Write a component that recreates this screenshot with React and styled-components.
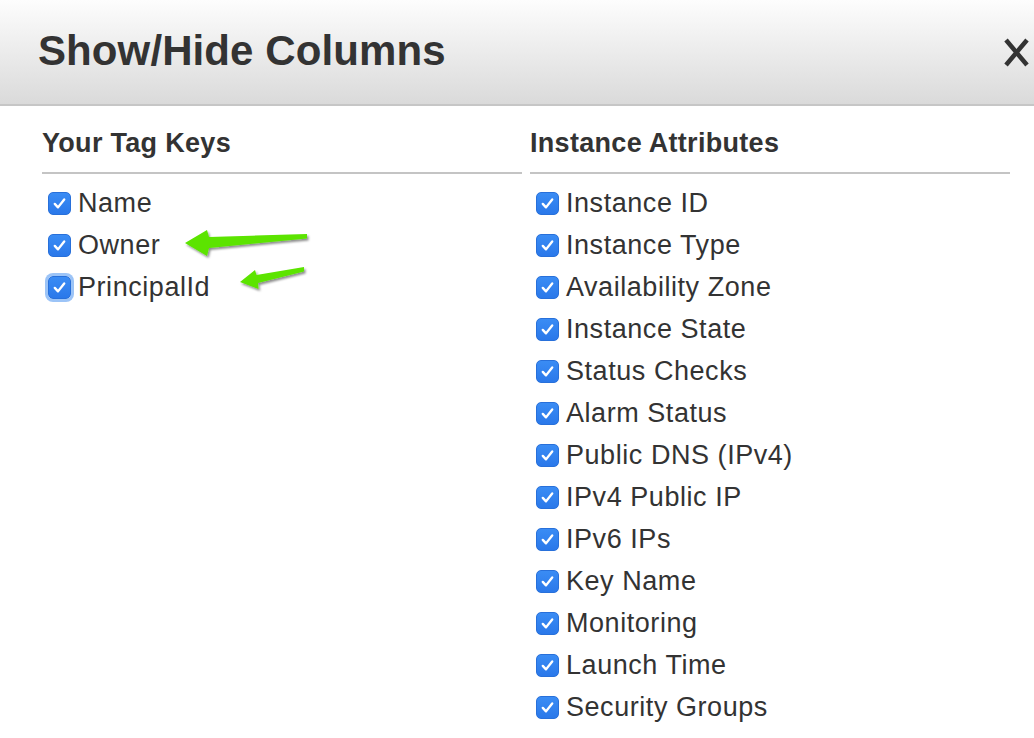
import React from 'react';
import styled, { createGlobalStyle, css } from 'styled-components';

const GlobalStyle = createGlobalStyle`
    html, body {
        margin: 0;
        padding: 0;
        background: #ffffff;
        overflow: hidden;
    }
    body {
        font-family: "Liberation Sans", Arial, Helvetica, sans-serif;
        color: #333333;
    }
`;

const Page = styled.div`
    position: relative;
    width: 1034px;
    height: 738px;
    overflow: hidden;
    background: #ffffff;
`;

const Header = styled.div`
    height: 106px;
    box-sizing: border-box;
    padding: 30px 0 0 38px;
    display: flex;
    justify-content: space-between;
    align-items: flex-start;
    background: linear-gradient(#fdfdfd, #dadada);
    border-bottom: 2px solid #c6c6c6;
`;

const Title = styled.h1`
    margin: 0;
    font-size: 42px;
    line-height: 42px;
    font-weight: bold;
    color: #333333;
    letter-spacing: 0.1px;
`;

const CloseButton = styled.button`
    border: none;
    background: transparent;
    padding: 0;
    margin: 7px 2px 0 0;
    width: 30px;
    height: 32px;
    cursor: pointer;
`;

const Body = styled.div`
    display: grid;
    grid-template-columns: 480px 480px;
    column-gap: 8px;
    padding: 0 24px 0 42px;
`;

const Column = styled.section`
    display: flex;
    flex-direction: column;
`;

const Heading = styled.h2`
    margin: 0;
    padding-top: 24px;
    padding-bottom: 15px;
    font-size: 27px;
    line-height: 27px;
    font-weight: bold;
    color: #333333;
    letter-spacing: 0.3px;
    border-bottom: 2px solid #c4c4c4;
`;

const List = styled.ul`
    list-style: none;
    margin: 0;
    padding: 8px 0 0 0;
`;

const Row = styled.li`
    height: 42px;
    display: flex;
    align-items: center;
    gap: 7px;
    padding-left: 6px;
    font-size: 27px;
    line-height: 42px;
    color: #333333;
    letter-spacing: 0.55px;
    white-space: nowrap;
`;

const Box = styled.span`
    width: 23px;
    height: 23px;
    box-sizing: border-box;
    flex: none;
    border-radius: 5px;
    background: linear-gradient(#3a8cf4, #2a78ea);
    border: 1px solid #2870da;
    display: flex;
    align-items: center;
    justify-content: center;
    ${({ $focused }) => $focused && css`
        box-shadow: 0 0 0 3px #9cc4f7;
    `}
`;

const Annotations = styled.svg`
    position: absolute;
    left: 0;
    top: 0;
    width: 1034px;
    height: 738px;
    pointer-events: none;
`;

const TAG_KEYS = ['Name', 'Owner', 'PrincipalId'];

const ATTRIBUTES = [
    'Instance ID',
    'Instance Type',
    'Availability Zone',
    'Instance State',
    'Status Checks',
    'Alarm Status',
    'Public DNS (IPv4)',
    'IPv4 Public IP',
    'IPv6 IPs',
    'Key Name',
    'Monitoring',
    'Launch Time',
    'Security Groups',
    'VPC ID'
];

const Check = ({ focused }) => (
    <Box $focused={focused}>
        <svg width="15" height="15" viewBox="0 0 14 14">
            <path d="M2.6 7.4 L5.6 10.6 L11.4 3.2" fill="none" stroke="#ffffff" strokeWidth="2.2" strokeLinecap="round" strokeLinejoin="round" />
        </svg>
    </Box>
);

const Option = ({ label, focused }) => (
    <Row>
        <Check focused={focused} />
        <span>{label}</span>
    </Row>
);

export default function App() {
    return (
        <Page>
            <GlobalStyle />
            <Header>
                <Title>Show/Hide Columns</Title>
                <CloseButton aria-label="Close">
                    <svg width="30" height="32" viewBox="0 0 30 32">
                        <path d="M4 3 L25 28 M25 3 L4 28" stroke="#333333" strokeWidth="4.5" strokeLinecap="butt" />
                    </svg>
                </CloseButton>
            </Header>
            <Body>
                <Column>
                    <Heading>Your Tag Keys</Heading>
                    <List>
                        {TAG_KEYS.map((k) => (
                            <Option key={k} label={k} focused={k === 'PrincipalId'} />
                        ))}
                    </List>
                </Column>
                <Column>
                    <Heading>Instance Attributes</Heading>
                    <List>
                        {ATTRIBUTES.map((a) => (
                            <Option key={a} label={a} />
                        ))}
                    </List>
                </Column>
            </Body>
            {/* green annotation arrows drawn over the list */}
            <Annotations viewBox="0 0 1034 738">
                <defs>
                    <filter id="arrowShadow" x="-20%" y="-50%" width="140%" height="200%">
                        <feDropShadow dx="1.5" dy="2" stdDeviation="1.2" floodColor="#000000" floodOpacity="0.45" />
                    </filter>
                </defs>
                <polygon
                    points="185,243 207,230 209,237 307,234 307,238.5 209,248 207,256"
                    fill="#5be402"
                    filter="url(#arrowShadow)"
                />
                <polygon
                    points="240,282 255,270 256.5,275 304,267 304,271.5 258,283 258.5,289"
                    fill="#5be402"
                    filter="url(#arrowShadow)"
                />
            </Annotations>
        </Page>
    );
}
